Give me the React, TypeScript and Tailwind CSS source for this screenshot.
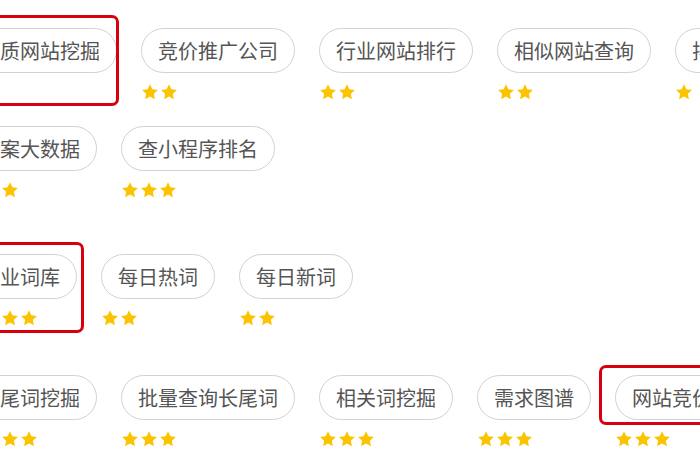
import React from "react";

type Item = { t: string; s: number; box?: "a" | "b" | "c" };

const rows: Item[][] = [
  [
    { t: "优质网站挖掘", s: 2, box: "a" },
    { t: "竞价推广公司", s: 2 },
    { t: "行业网站排行", s: 2 },
    { t: "相似网站查询", s: 2 },
    { t: "排名监控查询", s: 1 },
  ],
  [
    { t: "备案大数据", s: 3 },
    { t: "查小程序排名", s: 3 },
  ],
  [
    { t: "行业词库", s: 4, box: "b" },
    { t: "每日热词", s: 2 },
    { t: "每日新词", s: 2 },
  ],
  [
    { t: "长尾词挖掘", s: 4 },
    { t: "批量查询长尾词", s: 3 },
    { t: "相关词挖掘", s: 3 },
    { t: "需求图谱", s: 3 },
    { t: "网站竞价查询", s: 3, box: "c" },
  ],
];

function Star() {
  return (
    <svg width="18" height="18" viewBox="0 0 24 24" className="shrink-0">
      <path
        d="M12 1.5l3.2 6.7 7.3 1-5.3 5.1 1.3 7.3L12 18.1l-6.5 3.5 1.3-7.3-5.3-5.1 7.3-1z"
        fill="#fbc300"
      />
    </svg>
  );
}

function Tag({ item }: { item: Item }) {
  return (
    <div className="relative flex flex-col shrink-0">
      <div className="h-[45px] flex items-center justify-center px-[16px] rounded-full border border-[#d2d2d2] bg-white text-[20px] leading-none text-[#555555] whitespace-nowrap">
        {item.t}
      </div>
      <div className="mt-[10px] h-[18px] flex items-center gap-[1px]">
        {Array.from({ length: item.s }).map((_, i) => (
          <Star key={i} />
        ))}
      </div>
      {item.box === "a" && (
        <div className="absolute -top-[13px] -right-[2px] -bottom-[5px] -left-[10px] border-[3px] border-[#d7000f] rounded-[7px] pointer-events-none" />
      )}
      {item.box === "b" && (
        <div className="absolute -top-[12px] -right-[7px] -bottom-[6px] -left-[10px] border-[3px] border-[#d7000f] rounded-[7px] pointer-events-none" />
      )}
      {item.box === "c" && (
        <div className="absolute -top-[10px] -right-[20px] h-[60px] -left-[16px] border-[3px] border-[#d7000f] rounded-[7px] pointer-events-none" />
      )}
    </div>
  );
}

function Row({ items }: { items: Item[] }) {
  return (
    <div className="flex gap-[24px]">
      {items.map((it, i) => (
        <Tag key={i} item={it} />
      ))}
    </div>
  );
}

export default function App() {
  return (
    <div
      className="w-[700px] h-[470px] overflow-hidden bg-white"
      style={{ fontFamily: '"Noto Sans CJK SC", "Noto Sans", sans-serif' }}
    >
      <div className="ml-[-37px] pt-[28px] flex flex-col">
        <div className="flex flex-col gap-[25px]">
          <Row items={rows[0]} />
          <Row items={rows[1]} />
        </div>
        <div className="mt-[55px]">
          <Row items={rows[2]} />
        </div>
        <div className="mt-[48px]">
          <Row items={rows[3]} />
        </div>
      </div>
    </div>
  );
}
